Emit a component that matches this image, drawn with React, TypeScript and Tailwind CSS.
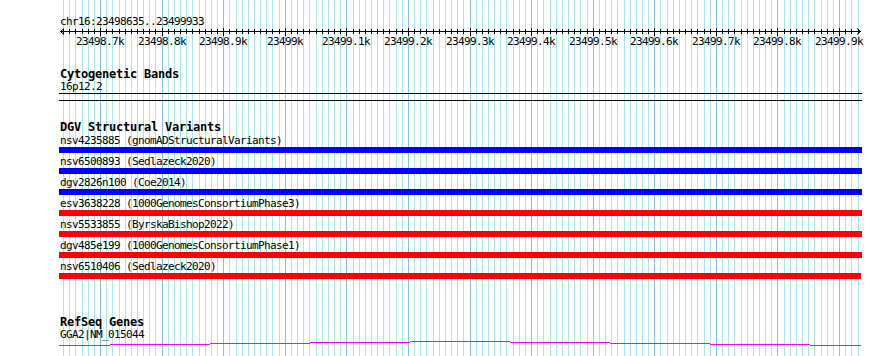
const START = 23498635;
const END = 23499933;
const toX = (bp: number) => 60 + ((bp - START) * 800) / (END - START + 1);

const gridBps: number[] = [];
for (let bp = 23498640; bp <= 23499930; bp += 10) gridBps.push(bp);

const label = (bp: number) => `${+(bp / 1000).toFixed(1)}k`;

const variants = [
  { name: "nsv4235885 (gnomADStructuralVariants)", bar: "bg-[#0000ff] w-[803px]" },
  { name: "nsv6500893 (Sedlazeck2020)", bar: "bg-[#0000ff] w-[803px]" },
  { name: "dgv2826n100 (Coe2014)", bar: "bg-[#0000ff] w-[803px]" },
  { name: "esv3638228 (1000GenomesConsortiumPhase3)", bar: "bg-[#ff0000] w-[803px]" },
  { name: "nsv5533855 (ByrskaBishop2022)", bar: "bg-[#ff0000] w-[803px]" },
  { name: "dgv485e199 (1000GenomesConsortiumPhase1)", bar: "bg-[#ff0000] w-[803px]" },
  { name: "nsv6510406 (Sedlazeck2020)", bar: "bg-[#ff0000] w-[802px]" },
];

// intron line of the gene model, one pixel step per 100px
const geneSteps = [
  { x1: 59, x2: 110, y: 4.5 },
  { x1: 110, x2: 210, y: 3.5 },
  { x1: 210, x2: 310, y: 2.5 },
  { x1: 310, x2: 410, y: 1.5 },
  { x1: 410, x2: 510, y: 0.5 },
  { x1: 510, x2: 610, y: 1.5 },
  { x1: 610, x2: 710, y: 2.5 },
  { x1: 710, x2: 810, y: 3.5 },
  { x1: 810, x2: 861, y: 4.5 },
];

function Grid() {
  return (
    <svg className="absolute inset-0" width={890} height={356}>
      {gridBps.map((bp) => {
        const x = Math.round(toX(bp)) + 0.5;
        return (
          <line
            key={bp}
            x1={x}
            x2={x}
            y1={0}
            y2={356}
            stroke={bp % 100 === 0 ? "#84c4e8" : "#a8e8ec"}
            strokeWidth={1}
          />
        );
      })}
    </svg>
  );
}

function Ruler() {
  return (
    <svg width={890} height={20} className="block">
      <line x1={60} x2={861} y1={3.5} y2={3.5} stroke="#000" />
      <polyline points="64,0.5 60.5,3.5 64,6.5" fill="none" stroke="#000" />
      <polyline points="857,0.5 860.5,3.5 857,6.5" fill="none" stroke="#000" />
      {gridBps.map((bp) => {
        const x = Math.round(toX(bp)) + 0.5;
        const major = bp % 100 === 0;
        return (
          <line key={bp} x1={x} x2={x} y1={major ? 0 : 1} y2={major ? 8 : 6} stroke="#000" />
        );
      })}
      {gridBps
        .filter((bp) => bp % 100 === 0)
        .map((bp) => (
          <text
            key={bp}
            x={Math.round(toX(bp))}
            y={17}
            textAnchor="middle"
            fontSize={11}
            letterSpacing={-0.62}
            fontFamily="'DejaVu Sans Mono', monospace"
            fill="#000"
          >
            {label(bp)}
          </text>
        ))}
    </svg>
  );
}

export default function App() {
  return (
    <div className="relative h-[356px] w-[890px] overflow-hidden bg-white font-['DejaVu_Sans_Mono',monospace] text-black">
      <Grid />
      <div className="relative flex flex-col pt-[16px]">
        <div className="h-[12px] pl-[60px] text-[11px] leading-[12px] tracking-[-0.62px]">chr16:23498635..23499933</div>
        <Ruler />

        <div className="mt-[20px] h-[13px] pl-[60px] text-[12px] font-bold leading-[13px] tracking-[-0.22px]">Cytogenetic Bands</div>
        <div className="h-[12px] pl-[60px] text-[11px] leading-[12px] tracking-[-0.62px]">16p12.2</div>
        <div className="ml-[59px] h-px w-[803px] bg-black" />
        <div className="ml-[59px] mt-[6px] h-px w-[803px] bg-black" />

        <div className="mt-[20px] h-[13px] pl-[60px] text-[12px] font-bold leading-[13px] tracking-[-0.22px]">DGV Structural Variants</div>
        <ul className="mt-[1px] flex flex-col">
          {variants.map((v) => (
            <li key={v.name} className="mb-[3px] flex flex-col">
              <span className="h-[12px] whitespace-pre pl-[60px] text-[11px] leading-[12px] tracking-[-0.62px]">{v.name}</span>
              <span className={`ml-[59px] h-[6px] ${v.bar}`} />
            </li>
          ))}
        </ul>

        <div className="mt-[34px] h-[13px] pl-[60px] text-[12px] font-bold leading-[13px] tracking-[-0.22px]">RefSeq Genes</div>
        <div className="h-[12px] pl-[60px] text-[11px] leading-[12px] tracking-[-0.62px]">GGA2|NM_015044</div>
        <svg width={890} height={6} className="block">
          {geneSteps.map((s) => (
            <line key={s.x1} x1={s.x1} x2={s.x2} y1={s.y} y2={s.y} stroke="#ff00ff" />
          ))}
        </svg>
      </div>
    </div>
  );
}
